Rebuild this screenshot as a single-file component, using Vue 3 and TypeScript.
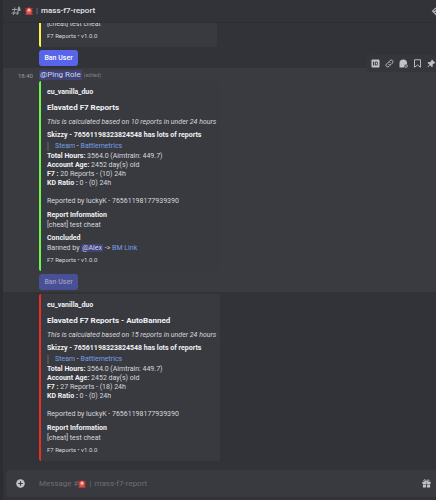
<script setup lang="ts">
import { defineComponent, h } from 'vue'

interface Stat { label: string; value: string }
interface Report {
  id: number
  tone: string
  time?: string
  title: string
  note: string
  stats: Stat[]
  concluded: boolean
}

const makeStats = (reports: string): Stat[] => [
  { label: 'Total Hours:', value: '3564.0 (Aimtrain: 449.7)' },
  { label: 'Account Age:', value: '2452 day(s) old' },
  { label: 'F7 :', value: reports },
  { label: 'KD Ratio :', value: '0 - (0) 24h' },
]

const reports: Report[] = [
  {
    id: 1,
    tone: 'green',
    time: '18:40',
    title: 'Elavated F7 Reports',
    note: 'This is calculated based on 10 reports in under 24 hours',
    stats: makeStats('20 Reports - (10) 24h'),
    concluded: true,
  },
  {
    id: 2,
    tone: 'red',
    title: 'Elavated F7 Reports - AutoBanned',
    note: 'This is calculated based on 15 reports in under 24 hours',
    stats: makeStats('27 Reports - (18) 24h'),
    concluded: false,
  },
]

const Siren = defineComponent(() => () =>
  h('svg', { viewBox: '0 0 16 16', class: 'siren', 'aria-hidden': 'true' }, [
    h('path', { d: 'M2 12V6q0-5 6-5t6 5v6z', fill: '#dd3f3b' }),
    h('path', { d: 'M0 2l3 2M16 2l-3 2M0 8h2M16 8h-2', stroke: '#c9453f', 'stroke-width': '1.6' }),
    h('path', { d: 'M5 9V6q0-3 3-3t3 3v3z', fill: '#ffc5b4' }),
    h('rect', { x: 1, y: 11, width: 14, height: 5, rx: 1, fill: '#b23a3a' }),
    h('rect', { x: 4, y: 11, width: 8, height: 2, fill: '#e8736b' }),
  ]),
)
</script>

<template>
  <div class="app">
    <header class="top">
      <svg class="hash" viewBox="0 0 20 20" aria-hidden="true">
        <path d="M8 3L5 18M14 10l-2 8M2 7h10M1 14h15" fill="none" stroke="#9b9ea5" stroke-width="2" />
        <path d="M14 5V3q0-2 2-2t2 2v2h1v5h-6V5z" fill="#9b9ea5" />
      </svg>
      <Siren />
      <h1><span class="divider">|</span> mass-f7-report</h1>
      <svg class="threads" viewBox="0 0 16 16" aria-hidden="true">
        <path d="M1 8l8-7 6 6-7 8z" fill="#b5b7bc" />
        <path d="M4 8l6-4M6 11l6-4" stroke="#323338" stroke-width="1.5" />
      </svg>
    </header>

    <main class="feed">
      <section class="message">
        <article class="embed yellow narrow">
          <p class="value">[cheat] test cheat</p>
          <p class="foot">F7 Reports • v1.0.0</p>
        </article>
        <button type="button" class="ban">Ban User</button>
      </section>

      <section v-for="r in reports" :key="r.id" class="message" :class="{ hovered: r.time }">
        <div v-if="r.time" class="tools">
          <button type="button" aria-label="Copy ID">
            <svg viewBox="0 0 18 18"><rect x="1" y="1" width="16" height="16" rx="2" fill="#c0c2c7" /><path d="M5 5v8M8.500 6H11q2 0 2 3t-2 3H8.500z" fill="none" stroke="#35363b" stroke-width="2" /></svg>
          </button>
          <button type="button" aria-label="Copy link">
            <svg viewBox="0 0 18 18" fill="none" stroke="#b5b7bc" stroke-width="2"><path d="M8 5l2-2q2.500-2 5 0t0 5l-3 3q-2.500 2-5 0M10 13l-2 2q-2.500 2-5 0t0-5l3-3q2.500-2 5 0" /></svg>
          </button>
          <button type="button" aria-label="Mark unread">
            <svg viewBox="0 0 18 18"><path d="M1 17V8q0-7 7.500-7T16 8v2q-5-1-6 4v3z" fill="#c0c2c7" /><circle cx="14" cy="14" r="3" fill="none" stroke="#b5b7bc" stroke-width="1.500" /><path d="M12 16l4-4" stroke="#b5b7bc" /></svg>
          </button>
          <button type="button" aria-label="Bookmark">
            <svg viewBox="0 0 18 18"><path d="M3 1.500h12v15L9 12l-6 4.500z" fill="none" stroke="#b5b7bc" stroke-width="2" /></svg>
          </button>
          <button type="button" aria-label="Pin">
            <svg viewBox="0 0 18 18"><path d="M10 1l7 7-2 1-1-.5-3 3 .5 4-1.500 1-4-4-4 4-1-1 4-4-4-4 1-1.500 4 .5 3-3-.5-1z" fill="#c0c2c7" /></svg>
          </button>
        </div>
        <div v-if="r.time" class="line">
          <time>{{ r.time }}</time>
          <span class="mention">@Ping Role</span>
          <small>(edited)</small>
        </div>
        <article class="embed" :class="r.tone">
          <p class="provider">eu_vanilla_duo</p>
          <h2>{{ r.title }}</h2>
          <p class="note">{{ r.note }}</p>
          <h3 class="player">Skizzy - 76561198323824548 has lots of reports</h3>
          <blockquote><a href="#">Steam</a> - <a href="#">Battlemetrics</a></blockquote>
          <div class="stats">
            <p v-for="s in r.stats" :key="s.label"><b>{{ s.label }}</b> {{ s.value }}</p>
            <p class="reporter">Reported by luckyK - 76561198177939390</p>
          </div>
          <h3 class="info">Report Information</h3>
          <p class="value">[cheat] test cheat</p>
          <template v-if="r.concluded">
            <h3 class="concluded">Concluded</h3>
            <p class="value">Banned by <span class="mention">@Alex</span> -&gt; <a href="#">BM Link</a></p>
          </template>
          <p class="foot">F7 Reports • v1.0.0</p>
        </article>
        <button v-if="r.concluded" type="button" class="ban" disabled>Ban User</button>
      </section>
    </main>

    <form class="composer" @submit.prevent>
      <button type="button" aria-label="Add attachment">
        <svg viewBox="0 0 20 20"><circle cx="10" cy="10" r="9.500" fill="#c0c2c7" /><path d="M10 5v10M5 10h10" stroke="#393a3f" stroke-width="2.500" /></svg>
      </button>
      <div class="entry">
        <label for="message">Message #<Siren /><span class="channel"><span class="divider">|</span> mass-f7-report</span></label>
        <input id="message" type="text" />
      </div>
      <button type="button" aria-label="Send a gift">
        <svg viewBox="0 0 20 20"><path d="M1 6h18v5H1zM2 12h7v7H2zM11 12h7v7h-7z" fill="#c0c2c7" /><path d="M10 6Q4 6 4 3.500T7 2q2 0 3 4 1-4 3-4t3 1.500T10 6z" fill="none" stroke="#c0c2c7" stroke-width="2" /><path d="M10 6v6" stroke="#77797e" stroke-width="1.500" /></svg>
      </button>
    </form>
  </div>
</template>

<style>
body { margin: 0; background: #323338; }
</style>

<style scoped>
* { box-sizing: border-box; }
.app {
  display: flex;
  flex-direction: column;
  height: 100vh;
  overflow: hidden;
  border-left: 3px solid #2c2d32;
  background: #323338;
  color: #d6d8dc;
  font: 7px/9px Roboto, "Liberation Sans", sans-serif;
}
p, h1, h2, h3, blockquote { margin: 0; font-size: inherit; }
a { color: #74a0e6; text-decoration: none; }
button { padding: 0; border: 0; background: none; font: inherit; }
svg { display: block; flex: none; }
.siren { width: 8px; height: 8px; }

.top {
  display: flex;
  flex: none;
  align-items: center;
  height: 23px;
  padding: 0 0 0 8px;
  border-bottom: 1px solid #2d2e33;
}
.hash { width: 10px; height: 10px; margin-right: 4px; }
.top h1 { margin-left: 3px; color: #e4e5e8; font-size: 8px; line-height: 12px; font-weight: 500; }
.top .divider { margin-right: 1px; color: #85878c; }
.threads { width: 10px; height: 10px; margin: 0 -5px 0 auto; }

.feed {
  display: flex;
  flex: 1;
  flex-direction: column;
  justify-content: flex-end;
  min-height: 0;
  overflow: hidden;
}
.message { position: relative; flex: none; padding: 2px 0 2px 36px; }
.hovered { padding-top: 1px; background: #3a3b40; }
.line { display: flex; align-items: center; gap: 2px; height: 12px; }
.line time { width: 36px; margin-left: -36px; padding-left: 15px; margin-right: -2px; color: #9a9ca2; font-size: 6px; }
.line small { color: #7f8187; font-size: 5px; }
.line .mention { font-size: 8px; line-height: 10px; }
.mention { padding: 0 1px; border-radius: 1px; background: #414473; color: #cdd2f8; }

.embed {
  width: 181px;
  padding: 7px 6px;
  border-left: 2px solid;
  border-radius: 2px;
  background: #393a3f;
  white-space: nowrap;
}
.narrow { width: 178px; }
.yellow { border-color: #fbf04c; }
.green { border-color: #6cf749; }
.red { border-color: #ea2f25; }
h2, h3, b, .provider { color: #f0f1f3; font-weight: 700; }
h2 { margin-top: 5px; font-size: 8px; line-height: 11px; }
.note { margin-top: 5px; font-style: italic; }
.player { margin-top: 4px; }
blockquote { margin-top: 2px; padding-left: 6px; border-left: 2px solid #505259; }
.stats { margin-top: 1px; }
.reporter { margin-top: 9px; }
.info { margin-top: 5px; }
.value { margin-top: 1px; }
.concluded { margin-top: 4px; }
.foot { margin-top: 2px; font-size: 6px; }

.ban {
  display: block;
  width: 39px;
  height: 16px;
  margin-top: 3px;
  border-radius: 3px;
  background: #5865eb;
  color: #fff;
  font-weight: 500;
}
.ban:disabled { background: #4a5096; color: #9a9dc2; }

.tools {
  position: absolute;
  top: -13px;
  right: -8px;
  display: flex;
  align-items: center;
  gap: 5px;
  height: 17px;
  padding: 0 8px 0 4px;
  border-radius: 3px;
  background: #35363b;
}
.tools svg { width: 9px; height: 9px; }

.composer {
  display: flex;
  flex: none;
  align-items: center;
  height: 27px;
  margin: 7px 0 3px 3px;
  padding: 0 5px 0 10px;
  border-radius: 4px 0 0 4px;
  background: #393a3f;
}
.composer svg { width: 9px; height: 9px; }
.entry { position: relative; flex: 1; margin-left: 14px; }
.entry label { display: flex; align-items: center; color: #6c6e75; font-size: 8px; line-height: 12px; }
.composer .siren { width: 8px; height: 8px; }
.channel { margin-left: 3px; }
.channel .divider { margin-right: 1px; }
.entry input { position: absolute; inset: 0; width: 100%; border: 0; outline: 0; background: none; color: #d0d2d6; font: inherit; }
</style>
